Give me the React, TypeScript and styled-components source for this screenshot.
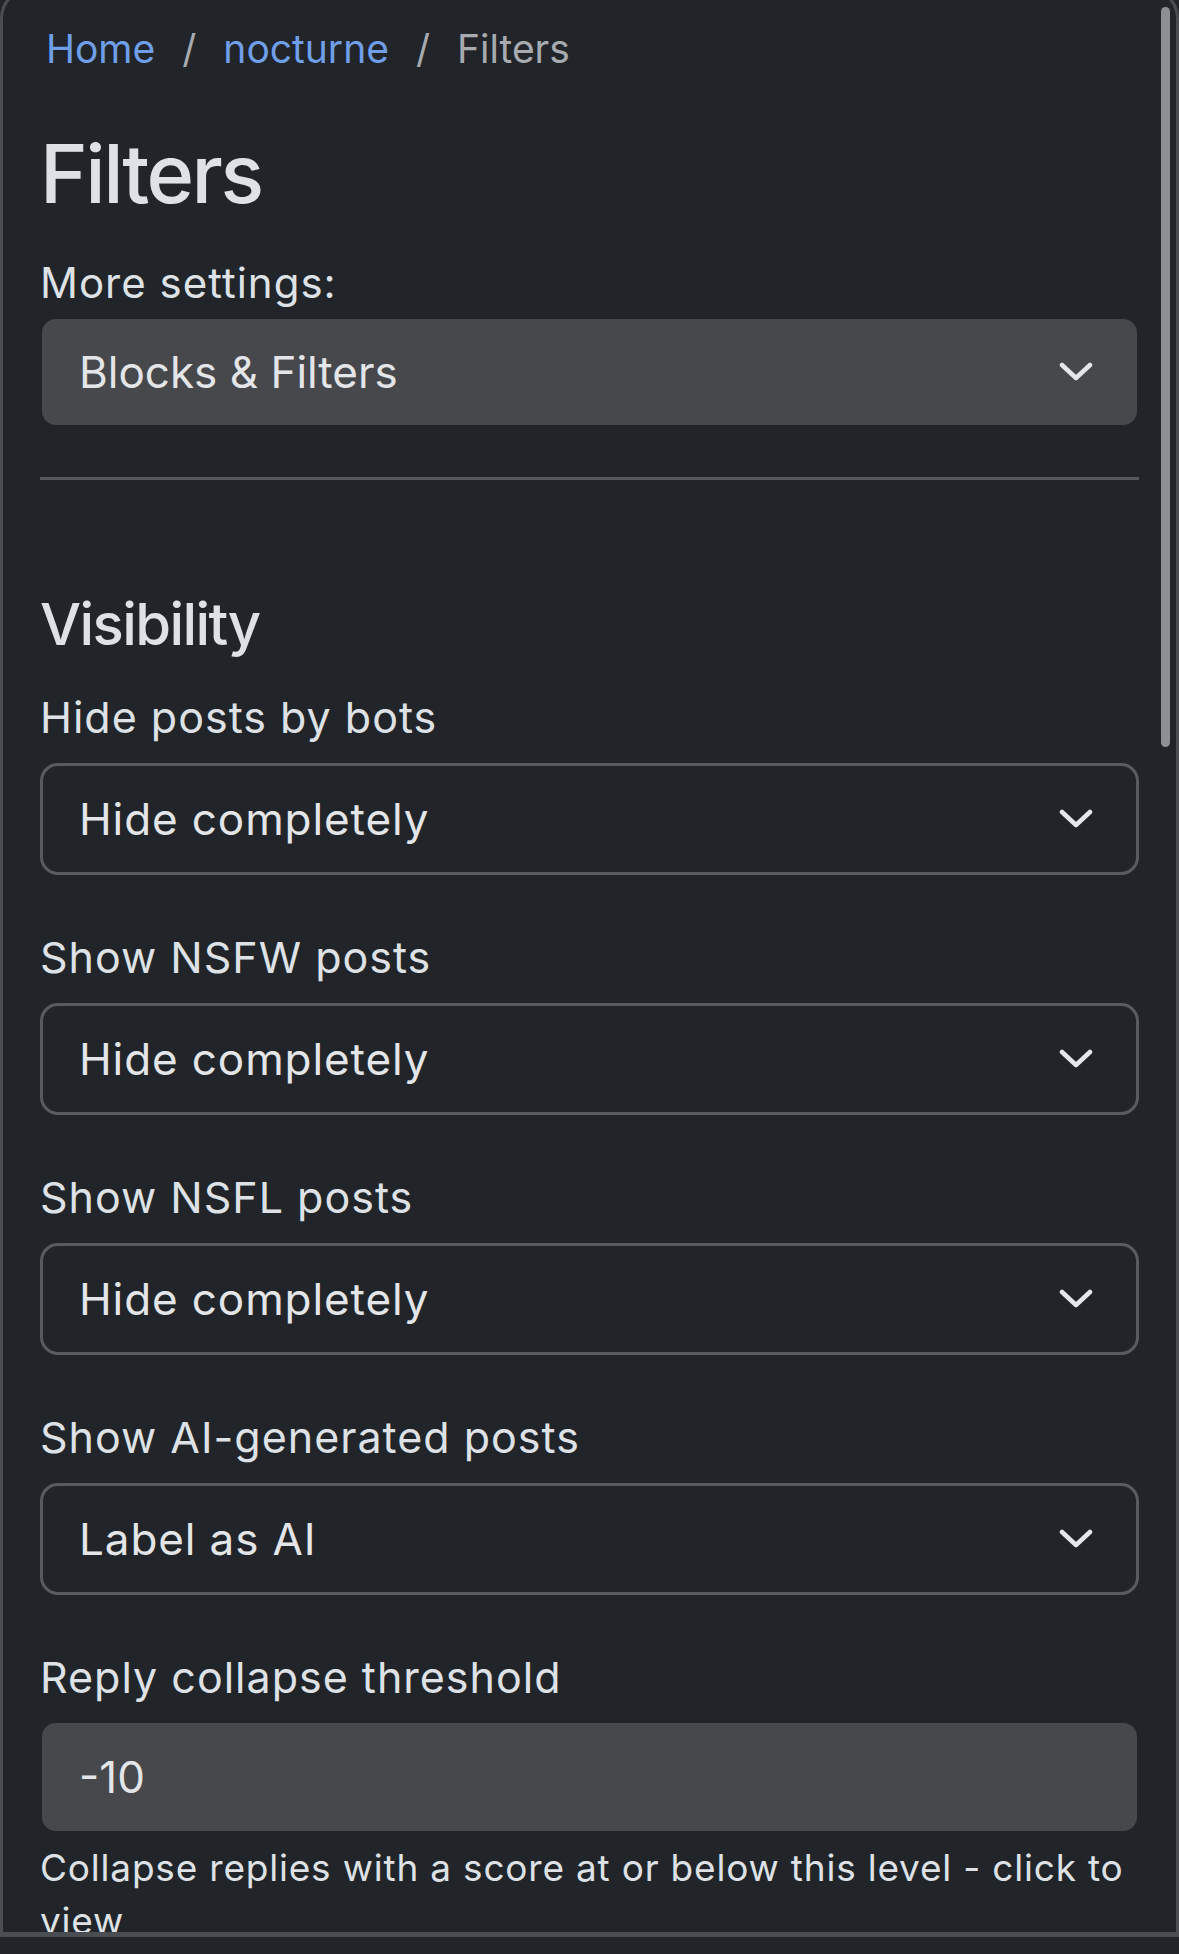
import React from "react";
import styled, { createGlobalStyle } from "styled-components";

const GlobalStyle = createGlobalStyle`
  html, body {
    margin: 0;
    padding: 0;
    background: #212529;
  }
  body {
    font-family: Inter, "Noto Sans", "Liberation Sans", sans-serif;
    color: #dee2e6;
    -webkit-font-smoothing: antialiased;
  }
  * { box-sizing: border-box; }
`;

const Frame = styled.div`
  position: relative;
  margin-top: -12px;
  height: 1949px;
  border: 3px solid #4a4d52;
  border-bottom-width: 5px;
  border-radius: 30px 30px 0 0;
  overflow: hidden;
  background: #212529;
`;

const Content = styled.main`
  padding: 29px 37px 0 37px;
  display: flex;
  flex-direction: column;
`;

const Breadcrumb = styled.nav`
  display: flex;
  align-items: center;
  padding-left: 6px;
  font-size: 39px;
  line-height: 58px;
`;

const Crumb = styled.a<{ $active?: boolean }>`
  color: ${(p) => (p.$active ? "#a7abb0" : "#6f9fe8")};
  text-decoration: none;
`;

const Divider = styled.span`
  color: #a7abb0;
  padding: 0 27px;
`;

const Title = styled.h1`
  margin: 48px 0 0 0;
  font-size: 81px;
  line-height: 97px;
  font-weight: 500;
  letter-spacing: -2.5px;
  color: #dee2e6;
`;

const SmallLabel = styled.div`
  margin-top: 31px;
  font-size: 42px;
  line-height: 58px;
  letter-spacing: 1px;
`;

const GrayBox = styled.div<{ $top?: number; $height: number }>`
  margin: ${(p) => p.$top ?? 0}px 2px 0 2px;
  height: ${(p) => p.$height}px;
  background: #47484c;
  border-radius: 14px;
  padding: 0 44px 0 37px;
  display: flex;
  align-items: center;
  justify-content: space-between;
  font-size: 44px;
  letter-spacing: 0;
  color: #e3e5e8;
`;

const Rule = styled.hr`
  margin: 52px 0 0 0;
  border: none;
  height: 3px;
  background: #55585d;
`;

const SectionTitle = styled.h2`
  margin: 109px 0 0 0;
  font-size: 58px;
  line-height: 70px;
  font-weight: 500;
  letter-spacing: -1.6px;
`;

const Field = styled.div<{ $first?: boolean }>`
  margin-top: ${(p) => (p.$first ? 28 : 52)}px;
  display: flex;
  flex-direction: column;
`;

const Label = styled.label`
  font-size: 43px;
  line-height: 60px;
  letter-spacing: 1px;
  margin-bottom: 16px;
`;

const Select = styled.div`
  height: 112px;
  border: 3px solid #585b60;
  border-radius: 18px;
  padding: 0 43px 0 36px;
  display: flex;
  align-items: center;
  justify-content: space-between;
  font-size: 44px;
  letter-spacing: 0.9px;
  color: #e3e5e8;
`;

const HelpText = styled.div`
  margin-top: 10px;
  font-size: 37px;
  line-height: 53px;
  letter-spacing: 0.8px;
`;

const Thumb = styled.div`
  position: absolute;
  top: 16px;
  right: 6px;
  width: 9px;
  height: 740px;
  border-radius: 5px;
  background: #8d8f94;
`;

const Chevron = () => (
  <svg width="34" height="20" viewBox="0 0 34 20" fill="none">
    <polyline
      points="3,3 17,16 31,3"
      stroke="#e6e7ea"
      strokeWidth="4.5"
      strokeLinecap="round"
      strokeLinejoin="round"
    />
  </svg>
);

const fields = [
  { label: "Hide posts by bots", value: "Hide completely" },
  { label: "Show NSFW posts", value: "Hide completely" },
  { label: "Show NSFL posts", value: "Hide completely" },
  { label: "Show AI-generated posts", value: "Label as AI" },
];

export default function App() {
  return (
    <>
      <GlobalStyle />
      <Frame>
        <Content>
          <Breadcrumb>
            <Crumb href="#">Home</Crumb>
            <Divider>/</Divider>
            <Crumb href="#">nocturne</Crumb>
            <Divider>/</Divider>
            <Crumb $active>Filters</Crumb>
          </Breadcrumb>
          <Title>Filters</Title>
          <SmallLabel>More settings:</SmallLabel>
          <GrayBox $top={7} $height={106}>
            <span>Blocks &amp; Filters</span>
            <Chevron />
          </GrayBox>
          <Rule />
          <SectionTitle>Visibility</SectionTitle>
          {fields.map((f, i) => (
            <Field key={f.label} $first={i === 0}>
              <Label>{f.label}</Label>
              <Select>
                <span>{f.value}</span>
                <Chevron />
              </Select>
            </Field>
          ))}
          <Field>
            <Label>Reply collapse threshold</Label>
            <GrayBox $height={108}>
              <span>-10</span>
            </GrayBox>
            <HelpText>
              Collapse replies with a score at or below this level - click to view
            </HelpText>
          </Field>
        </Content>
        <Thumb />
      </Frame>
    </>
  );
}
